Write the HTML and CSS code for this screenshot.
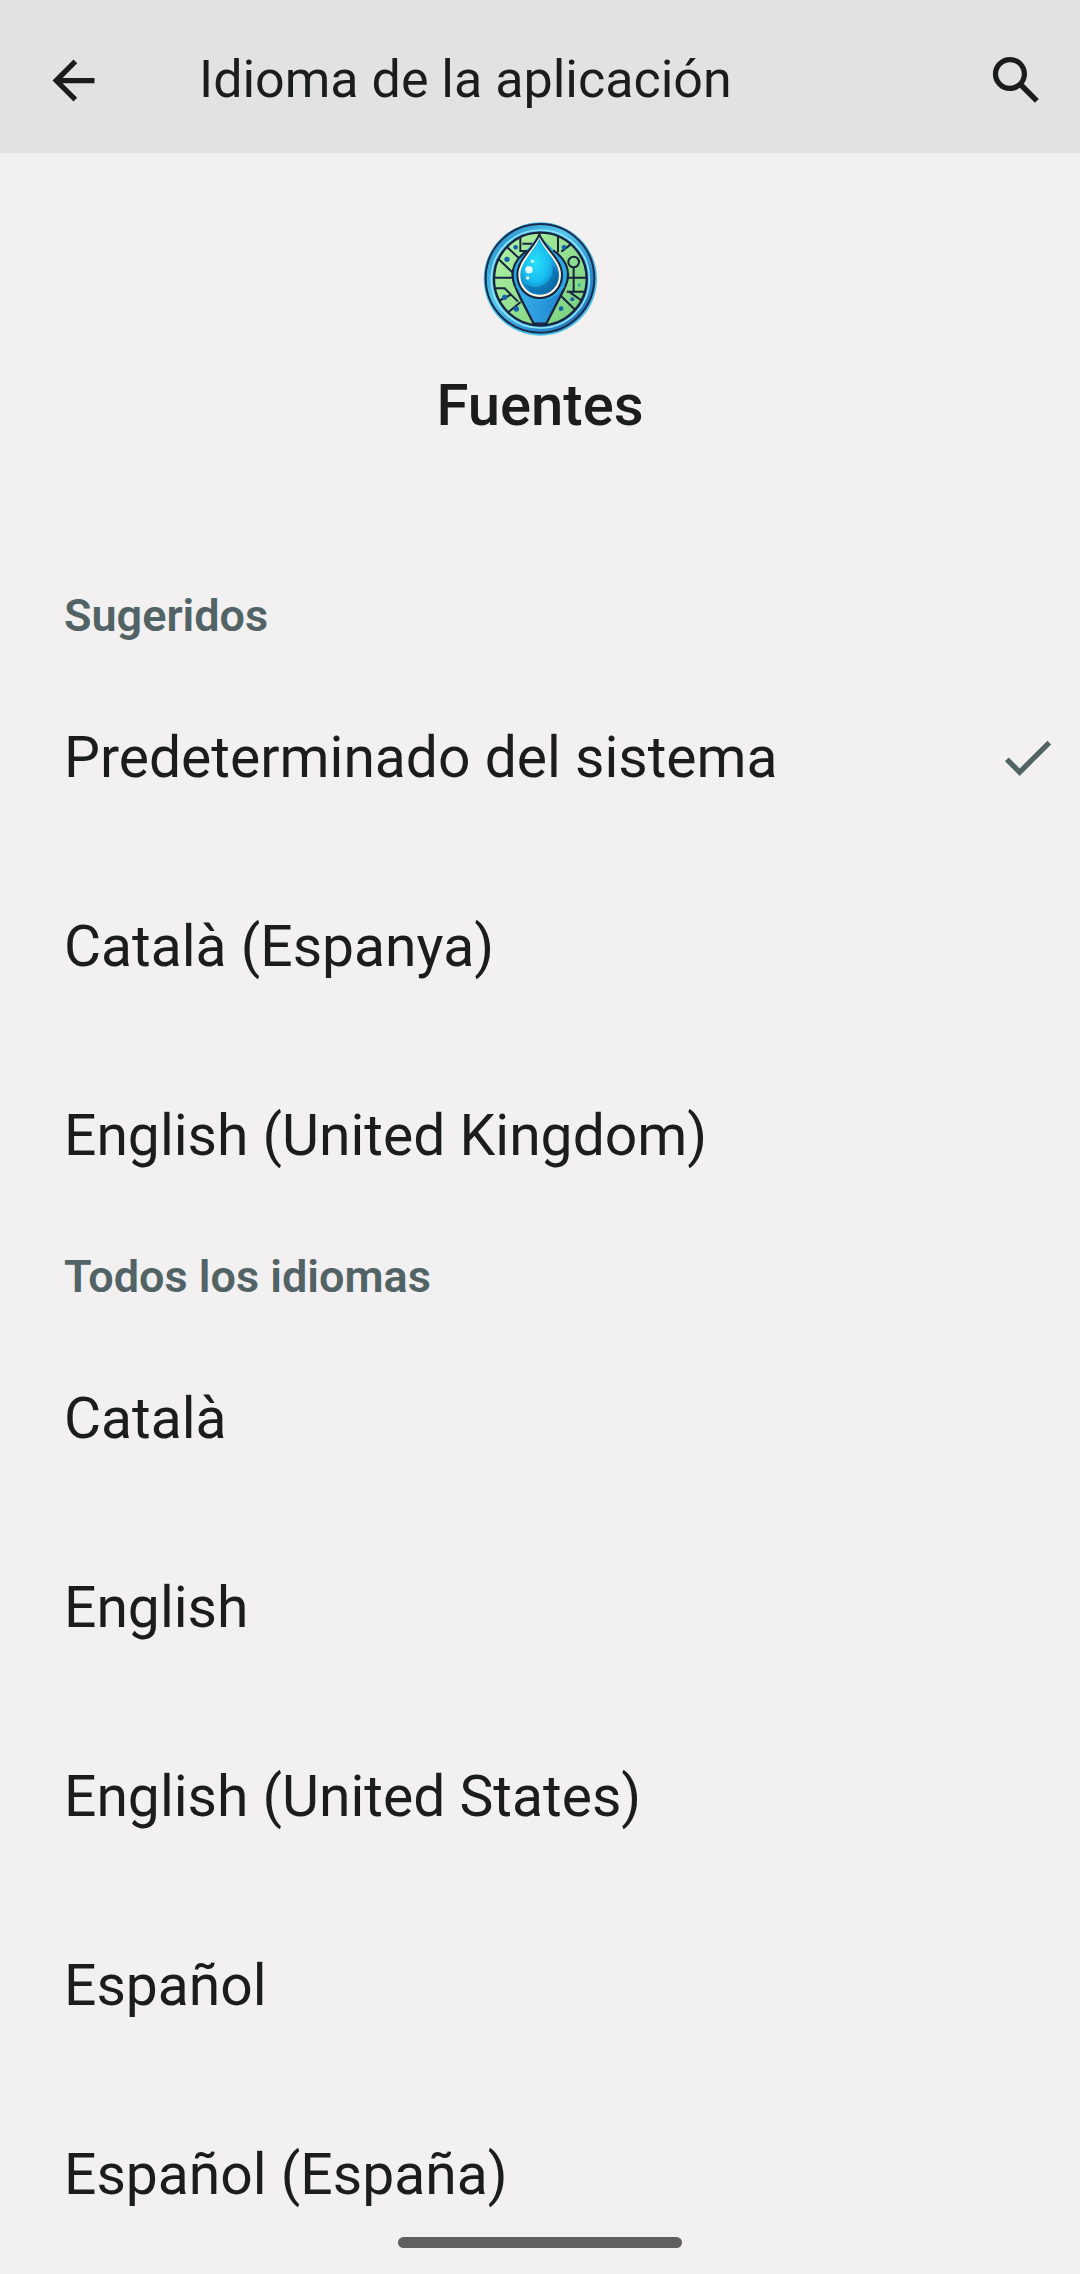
FILE: index.html
```html
<!DOCTYPE html>
<html lang="es">
<head>
  <meta charset="utf-8">
  <meta name="viewport" content="width=device-width, initial-scale=1">
  <title>Idioma de la aplicación</title>
  <link rel="stylesheet" href="styles.css">
</head>
<body>
  <header class="toolbar">
    <button class="icon-button" type="button" aria-label="Atrás">
      <svg class="icon" viewBox="0 0 24 24" aria-hidden="true"><path d="M20 11H7.83l5.59-5.59L12 4l-8 8 8 8 1.41-1.41L7.83 13H20z"/></svg>
    </button>
    <h1 class="toolbar-title">Idioma de la aplicación</h1>
    <button class="icon-button icon-button-end" type="button" aria-label="Buscar">
      <svg class="icon" viewBox="0 0 24 24" aria-hidden="true"><path d="M20.49 19l-5.73-5.73C15.53 12.2 16 10.91 16 9.5 16 5.91 13.09 3 9.5 3S3 5.91 3 9.5 5.91 16 9.5 16c1.41 0 2.7-.47 3.77-1.24L19 20.49 20.49 19zM5 9.5C5 7.01 7.01 5 9.5 5S14 7.01 14 9.5 11.99 14 9.5 14 5 11.99 5 9.5z"/></svg>
    </button>
  </header>

  <main>
    <section class="app">
      <svg class="app-logo" viewBox="36 36 348 348" aria-hidden="true">
        <defs>
          <linearGradient id="rim" x1="0" y1="0" x2="1" y2="1">
            <stop offset="0" stop-color="#1d86c4"/><stop offset=".4" stop-color="#54c8ef"/>
            <stop offset=".7" stop-color="#2b8fd0"/><stop offset="1" stop-color="#1f6cae"/>
          </linearGradient>
          <linearGradient id="land" x1="0" y1="0" x2="1" y2="1">
            <stop offset="0" stop-color="#b4f3a4"/><stop offset="1" stop-color="#74ce7c"/>
          </linearGradient>
          <linearGradient id="pin" x1="0" y1="0" x2="1" y2="0">
            <stop offset="0" stop-color="#3db4ec"/><stop offset="1" stop-color="#1b7fcb"/>
          </linearGradient>
          <radialGradient id="drop" cx=".4" cy=".42" r=".68">
            <stop offset="0" stop-color="#28e0f8"/><stop offset=".5" stop-color="#19bdf0"/>
            <stop offset=".78" stop-color="#1189cc"/><stop offset="1" stop-color="#0b5ea5"/>
          </radialGradient>
          <clipPath id="disc"><circle cx="211" cy="210" r="137"/></clipPath>
        </defs>
        <circle cx="211" cy="210" r="170" fill="#45bfe8"/>
        <circle cx="210" cy="208" r="163" fill="url(#rim)" stroke="#1c2b4c" stroke-width="6"/>
        <circle cx="211" cy="210" r="147" fill="none" stroke="#8fe4f8" stroke-width="5"/>
        <circle cx="211" cy="210" r="139" fill="url(#land)" stroke="#18233f" stroke-width="7"/>
        <g clip-path="url(#disc)">
          <g fill="none" stroke="#18233f" stroke-width="6">
            <path d="M105 108l42 40M151 72v54h16M157 104h30M80 145l50 48M70 206h60M70 238h34l40 40M75 282l50-26M104 319l48-40M264 76v54M274 128l35-27M290 206h60M290 248h60M274 262l55 54M300 250l48 34M311 176v72"/>
            <circle cx="311" cy="159" r="16"/>
          </g>
          <path d="M128 196c0 30 18 60 30 84l33 64h38l33-64c14-28 32-54 32-84z" fill="url(#pin)" stroke="#18233f" stroke-width="7"/>
        </g>
        <path d="M207 76C180 126 128 145 128 196c0 42 36 79 82 79s84-37 84-79c0-51-55-76-87-120z" fill="#2ba8df"/>
        <path d="M172 124c-28 20-44 41-44 72 0 14 3 26 7 36M250 124c28 20 44 41 44 72 0 14-3 26-8 36" fill="none" stroke="#18233f" stroke-width="6"/>
        <path d="M208 76c-15 40-66 75-66 121 0 39 28 70 67 70s67-31 67-70c0-46-53-81-68-121z" fill="#fff5df" stroke="#18233f" stroke-width="6"/>
        <path d="M208 88c-13 36-57 69-57 109 0 34 25 60 58 60s58-26 58-60c0-40-46-73-59-109z" fill="url(#drop)"/>
        <path d="M248 170c4 31-14 57-46 63-18 3-29-3-37-12 8 22 24 31 44 31 33 0 53-27 53-55 0-10-6-20-14-27z" fill="#0a659e" opacity=".55"/>
        <g fill="#e6ffff"><circle cx="177" cy="182" r="11"/><circle cx="187" cy="157" r="5"/><circle cx="173" cy="207" r="5"/></g>
        <g fill="#1762ad"><circle cx="137" cy="115" r="7"/><circle cx="111" cy="151" r="8"/><circle cx="104" cy="265" r="8"/><circle cx="139" cy="300" r="8"/><circle cx="282" cy="115" r="7"/><circle cx="307" cy="271" r="6"/><circle cx="273" cy="299" r="7"/></g>
        <circle cx="328" cy="228" r="5" fill="#2fb3a6"/>
      </svg>
      <h2 class="app-name">Fuentes</h2>
    </section>

    <form>
      <section>
        <h3 class="group-title">Sugeridos</h3>
        <label class="row"><input class="row-input" type="radio" name="locale" checked><span>Predeterminado del sistema</span><svg class="icon row-check" viewBox="0 0 24 24" aria-hidden="true"><path d="M9 16.17L4.83 12l-1.42 1.41L9 19 21 7l-1.41-1.41z"/></svg></label>
        <label class="row"><input class="row-input" type="radio" name="locale"><span>Català (Espanya)</span><svg class="icon row-check" viewBox="0 0 24 24" aria-hidden="true"><path d="M9 16.17L4.83 12l-1.42 1.41L9 19 21 7l-1.41-1.41z"/></svg></label>
        <label class="row"><input class="row-input" type="radio" name="locale"><span>English (United Kingdom)</span><svg class="icon row-check" viewBox="0 0 24 24" aria-hidden="true"><path d="M9 16.17L4.83 12l-1.42 1.41L9 19 21 7l-1.41-1.41z"/></svg></label>
      </section>
      <section>
        <h3 class="group-title">Todos los idiomas</h3>
        <label class="row"><input class="row-input" type="radio" name="locale"><span>Català</span><svg class="icon row-check" viewBox="0 0 24 24" aria-hidden="true"><path d="M9 16.17L4.83 12l-1.42 1.41L9 19 21 7l-1.41-1.41z"/></svg></label>
        <label class="row"><input class="row-input" type="radio" name="locale"><span>English</span><svg class="icon row-check" viewBox="0 0 24 24" aria-hidden="true"><path d="M9 16.17L4.83 12l-1.42 1.41L9 19 21 7l-1.41-1.41z"/></svg></label>
        <label class="row"><input class="row-input" type="radio" name="locale"><span>English (United States)</span><svg class="icon row-check" viewBox="0 0 24 24" aria-hidden="true"><path d="M9 16.17L4.83 12l-1.42 1.41L9 19 21 7l-1.41-1.41z"/></svg></label>
        <label class="row"><input class="row-input" type="radio" name="locale"><span>Español</span><svg class="icon row-check" viewBox="0 0 24 24" aria-hidden="true"><path d="M9 16.17L4.83 12l-1.42 1.41L9 19 21 7l-1.41-1.41z"/></svg></label>
        <label class="row"><input class="row-input" type="radio" name="locale"><span>Español (España)</span><svg class="icon row-check" viewBox="0 0 24 24" aria-hidden="true"><path d="M9 16.17L4.83 12l-1.42 1.41L9 19 21 7l-1.41-1.41z"/></svg></label>
      </section>
    </form>
  </main>

  <div class="home-handle"></div>
</body>
</html>
```
FILE: styles.css
```css
* {
  box-sizing: border-box;
}

body {
  margin: 0;
  background: #f2f0f1;
  color: #1b1c1c;
  font-family: Roboto, "Noto Sans", sans-serif;
  font-size: 57px;
  font-weight: 400;
}

h1,
h2,
h3 {
  margin: 0;
}

.toolbar {
  display: flex;
  align-items: center;
  padding: 7px 32px 0 42px;
  min-height: 153px;
  background: #e2e2e2;
}

.icon-button {
  display: flex;
  padding: 0;
  border: 0;
  background: none;
  color: inherit;
}

.icon-button-end {
  margin-left: auto;
}

.icon {
  flex: none;
  width: 63px;
  height: 63px;
  fill: currentColor;
}

.toolbar-title {
  margin-left: 94px;
  font-size: 52px;
  font-weight: 400;
  line-height: 64px;
}

.app {
  display: flex;
  flex-direction: column;
  align-items: center;
  gap: 32px;
  padding: 68px 24px 128px;
}

.app-logo {
  width: 116px;
  height: 116px;
}

.app-name {
  font-size: 58px;
  font-weight: 500;
  line-height: 72px;
}

.group-title {
  padding: 19px 64px;
  color: #526365;
  font-size: 45px;
  font-weight: 600;
  line-height: 56px;
}

.row {
  position: relative;
  display: flex;
  align-items: center;
  justify-content: space-between;
  min-height: 189px;
  padding: 0 21px 0 64px;
  line-height: 72px;
}

.row-input {
  position: absolute;
  opacity: 0;
}

.row-check {
  visibility: hidden;
  color: #526365;
}

.row-input:checked ~ .row-check {
  visibility: visible;
}

.home-handle {
  position: fixed;
  bottom: 26px;
  left: 50%;
  width: 284px;
  height: 11px;
  margin-left: -142px;
  border-radius: 6px;
  background: #606060;
}
```
